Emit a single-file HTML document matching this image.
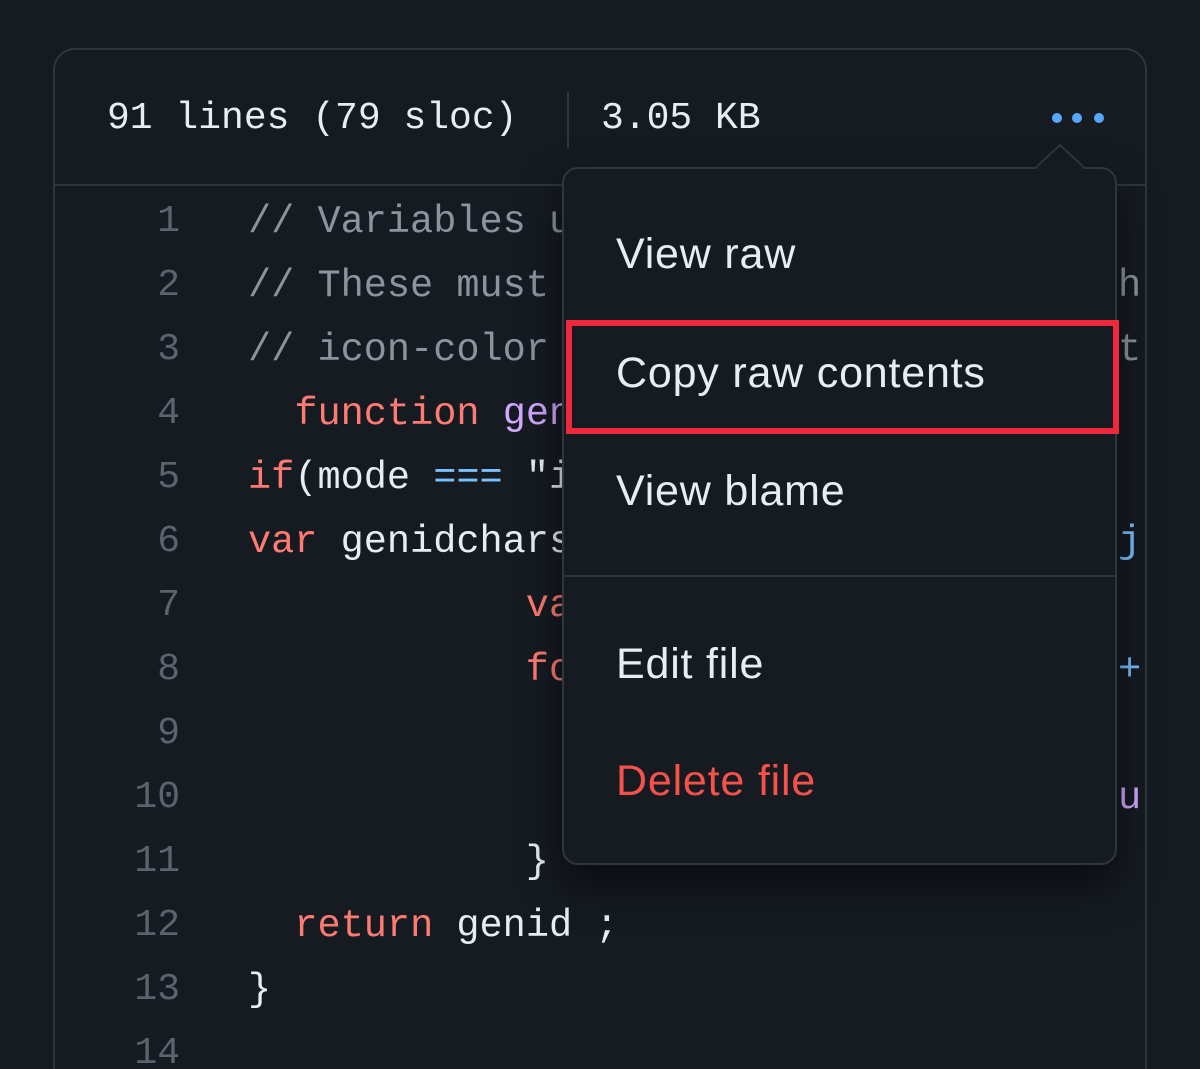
<!DOCTYPE html>
<html><head><meta charset="utf-8"><style>
*{margin:0;padding:0;box-sizing:border-box}
html,body{width:1200px;height:1069px;overflow:hidden}
body{background:#161a21;position:relative;font-family:"Liberation Mono",monospace}
.box{position:absolute;left:53px;top:48px;width:1094px;height:1060px;border:2px solid #30363d;border-radius:22px;background:#161b22}
.hdr{position:absolute;left:0;top:0;width:100%;height:136px;border-bottom:2px solid #30363d}
.ht{position:absolute;top:46px;font-size:38px;line-height:46px;color:#e6edf3;white-space:pre}
.sep{position:absolute;left:512px;top:42px;width:2px;height:56px;background:#30363d}
.dot{position:absolute;top:63px;width:10px;height:10px;border-radius:50%;background:#58a6ff}
.ln{position:absolute;left:100px;width:80px;text-align:right;font-size:38px;color:#5b636d;line-height:64px}
.cd{position:absolute;left:248px;font-size:38.6px;color:#e6edf3;line-height:64px;white-space:pre}
.c{color:#8b949e}.k{color:#ff7b72}.p{color:#d2a8ff}.b{color:#79c0ff}
.menu{position:absolute;left:562px;top:167px;width:555px;height:698px;background:#161b22;border:2px solid #30363d;border-radius:16px;box-shadow:0 20px 40px rgba(0,0,0,.55);font-family:"Liberation Sans",sans-serif}
.mi{position:absolute;left:52px;font-size:43px;letter-spacing:0.8px;color:#e6edf3;line-height:48px}
.red{position:absolute;left:2px;top:151px;width:553px;height:114px;border:6px solid #f0283c}
.div{position:absolute;left:0;top:406px;width:100%;height:2px;background:#30363d}
</style></head><body>
<div class="box">
 <div class="hdr">
  <div class="ht" style="left:52px">91 lines (79 sloc)</div>
  <div class="sep"></div>
  <div class="ht" style="left:546px">3.05 KB</div>
  <div class="dot" style="left:997px"></div>
  <div class="dot" style="left:1017px"></div>
  <div class="dot" style="left:1039px"></div>
 </div>
</div>
<div class="ln" style="top:190px">1</div>
<div class="ln" style="top:254px">2</div>
<div class="ln" style="top:318px">3</div>
<div class="ln" style="top:382px">4</div>
<div class="ln" style="top:446px">5</div>
<div class="ln" style="top:510px">6</div>
<div class="ln" style="top:574px">7</div>
<div class="ln" style="top:638px">8</div>
<div class="ln" style="top:702px">9</div>
<div class="ln" style="top:766px">10</div>
<div class="ln" style="top:830px">11</div>
<div class="ln" style="top:894px">12</div>
<div class="ln" style="top:958px">13</div>
<div class="ln" style="top:1022px">14</div>
<div class="cd c" style="top:190px">// Variables u</div>
<div class="cd c" style="top:254px">// These must</div>
<div class="cd c" style="top:318px">// icon-color</div>
<div class="cd" style="top:382px">  <span class="k">function</span> <span class="p">gen</span></div>
<div class="cd" style="top:446px"><span class="k">if</span>(mode <span class="b">===</span> "i</div>
<div class="cd" style="top:510px"><span class="k">var</span> genidchars</div>
<div class="cd k" style="top:574px">            va</div>
<div class="cd k" style="top:638px">            fo</div>
<div class="cd" style="top:830px">            }</div>
<div class="cd" style="top:894px">  <span class="k">return</span> genid ;</div>
<div class="cd" style="top:958px">}</div>
<div class="cd c" style="top:254px;left:1118px">h</div>
<div class="cd c" style="top:318px;left:1118px">t</div>
<div class="cd b" style="top:510px;left:1118px">j</div>
<div class="cd b" style="top:638px;left:1118px">+</div>
<div class="cd p" style="top:766px;left:1118px">u</div>
<svg style="position:absolute;left:1034px;top:143px" width="54" height="28"><path d="M0 26 L26 2 L52 26" fill="#161b22" stroke="#30363d" stroke-width="2"/></svg>
<div class="menu">
 <div class="mi" style="top:61px">View raw</div>
 <div class="red"></div>
 <div class="mi" style="top:180px">Copy raw contents</div>
 <div class="mi" style="top:298px">View blame</div>
 <div class="div"></div>
 <div class="mi" style="top:471px">Edit file</div>
 <div class="mi" style="top:588px;color:#f85149">Delete file</div>
</div>
<svg style="position:absolute;left:1036px;top:157px" width="50" height="14"><path d="M0 12 L24 -10 L48 12 Z" fill="#161b22"/></svg>
</body></html>
